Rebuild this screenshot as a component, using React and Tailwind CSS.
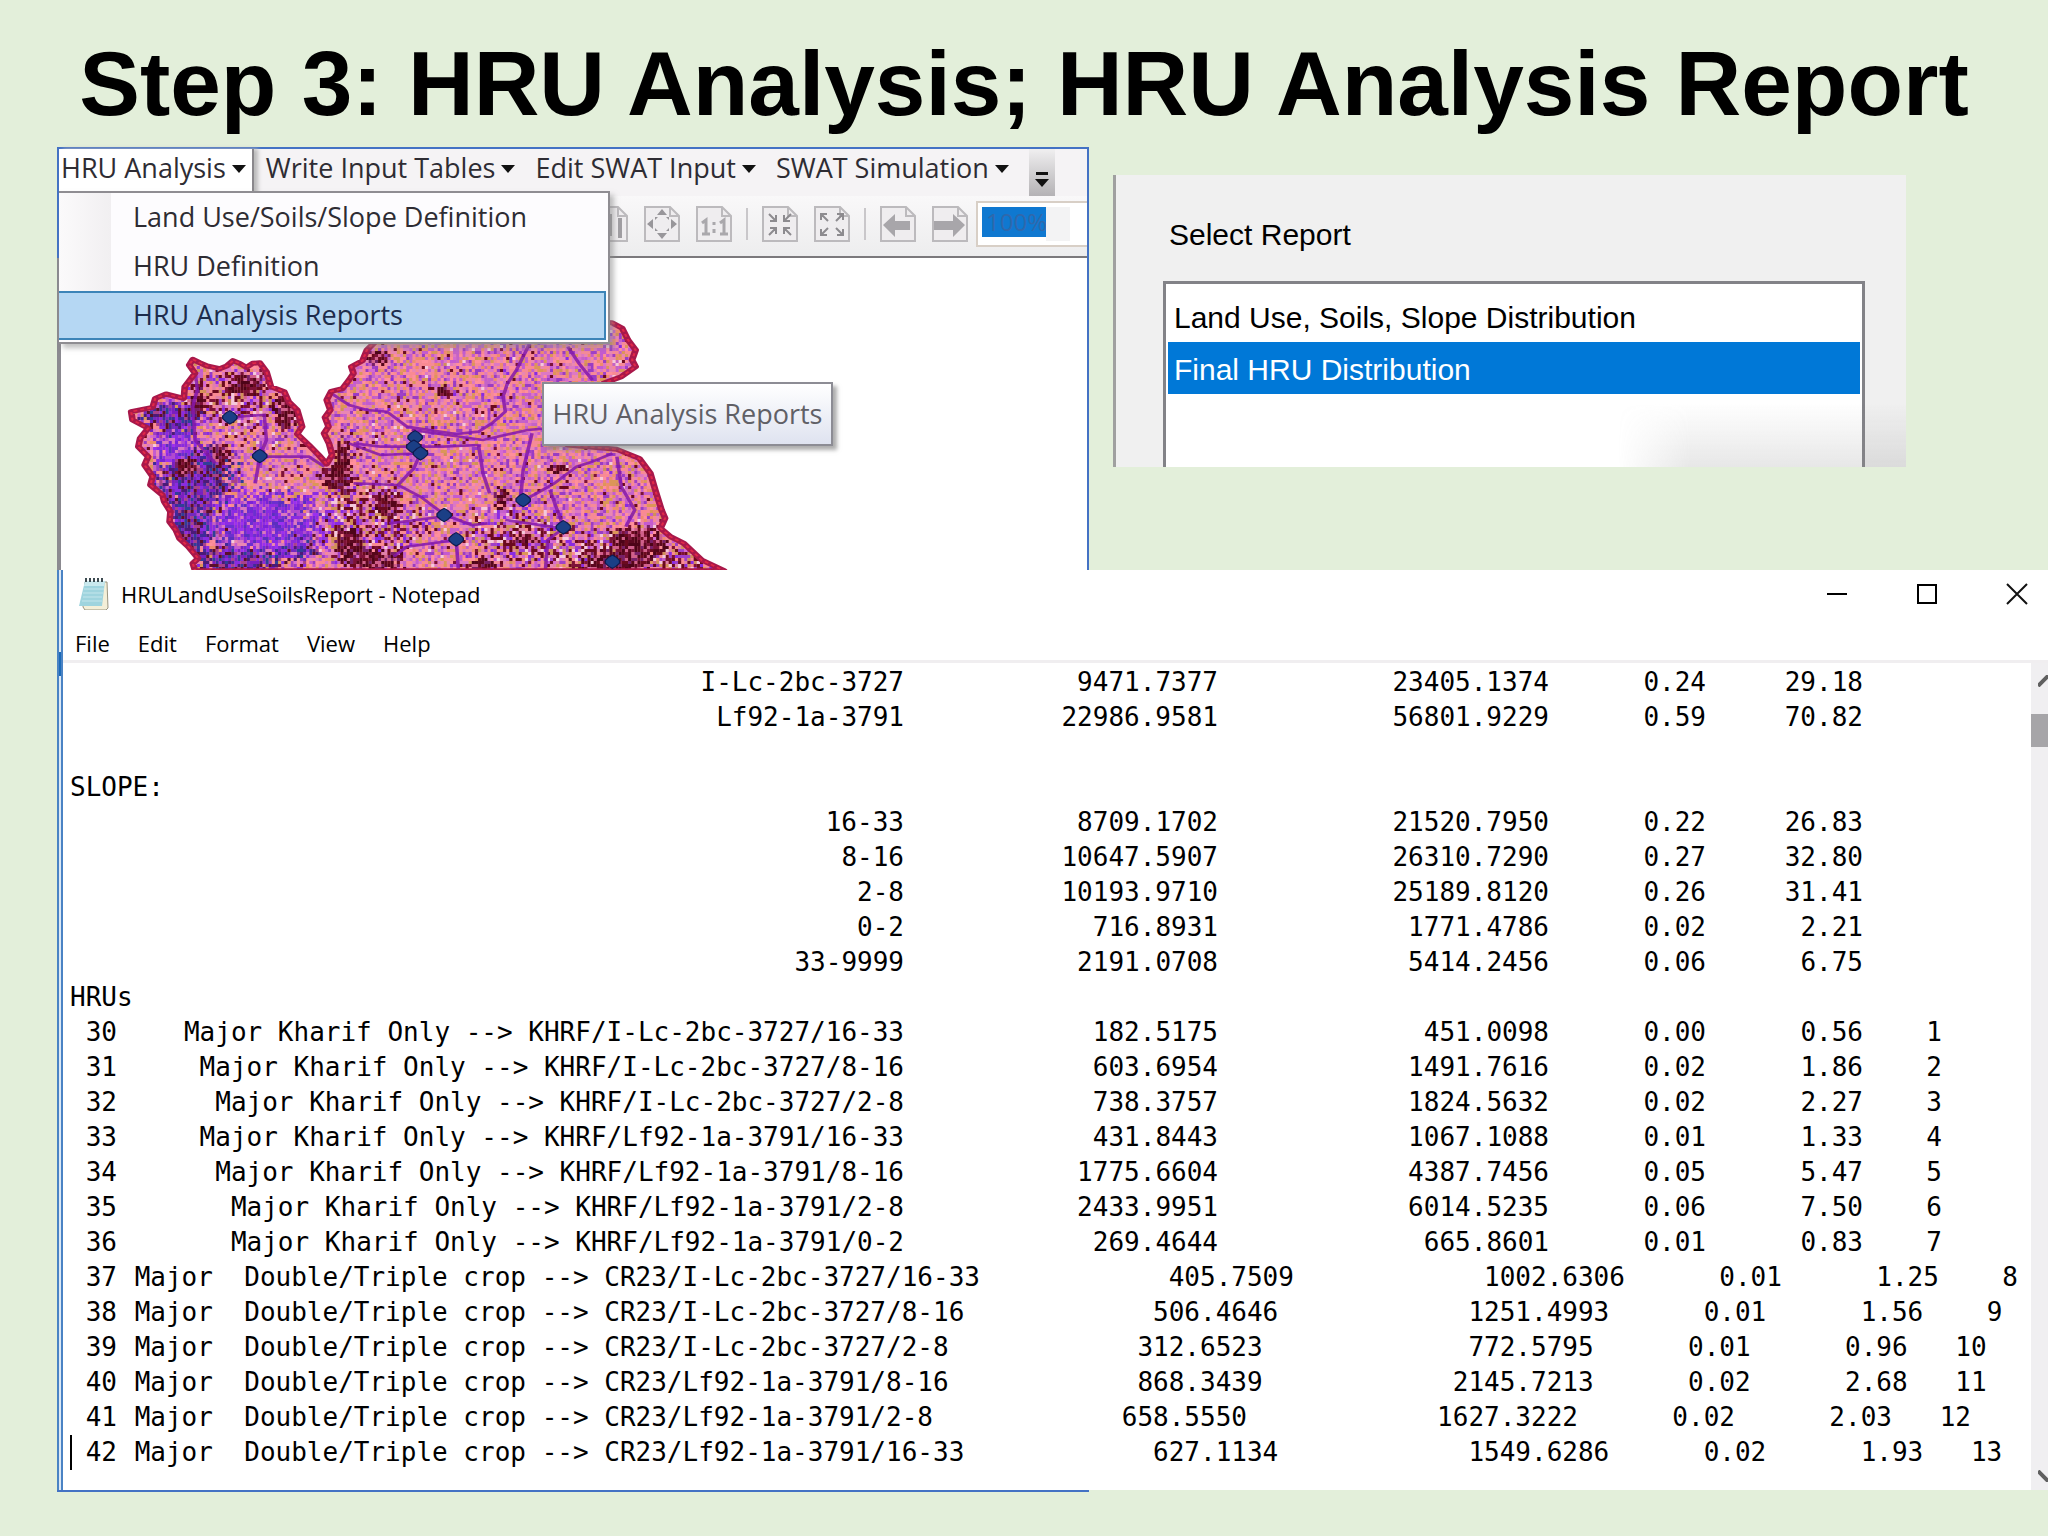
import React, { useState } from 'react';

const MENUS = ['HRU Analysis', 'Write Input Tables', 'Edit SWAT Input', 'SWAT Simulation'];
const HRU_ITEMS = ['Land Use/Soils/Slope Definition', 'HRU Definition', 'HRU Analysis Reports'];
const REPORTS = ['Land Use, Soils, Slope Distribution', 'Final HRU Distribution'];
const NOTEPAD_MENUS = ['File', 'Edit', 'Format', 'View', 'Help'];

// id, label, area [ha], area [acres], % watershed, % subbasin, HRU number
const ROWS = [
  ['', 'I-Lc-2bc-3727', '9471.7377', '23405.1374', '0.24', '29.18'],
  ['', 'Lf92-1a-3791', '22986.9581', '56801.9229', '0.59', '70.82'],
  [''],
  ['SLOPE:'],
  ['', '16-33', '8709.1702', '21520.7950', '0.22', '26.83'],
  ['', '8-16', '10647.5907', '26310.7290', '0.27', '32.80'],
  ['', '2-8', '10193.9710', '25189.8120', '0.26', '31.41'],
  ['', '0-2', '716.8931', '1771.4786', '0.02', '2.21'],
  ['', '33-9999', '2191.0708', '5414.2456', '0.06', '6.75'],
  ['HRUs'],
  [' 30', 'Major Kharif Only --> KHRF/I-Lc-2bc-3727/16-33', '182.5175', '451.0098', '0.00', '0.56', '1'],
  [' 31', 'Major Kharif Only --> KHRF/I-Lc-2bc-3727/8-16', '603.6954', '1491.7616', '0.02', '1.86', '2'],
  [' 32', 'Major Kharif Only --> KHRF/I-Lc-2bc-3727/2-8', '738.3757', '1824.5632', '0.02', '2.27', '3'],
  [' 33', 'Major Kharif Only --> KHRF/Lf92-1a-3791/16-33', '431.8443', '1067.1088', '0.01', '1.33', '4'],
  [' 34', 'Major Kharif Only --> KHRF/Lf92-1a-3791/8-16', '1775.6604', '4387.7456', '0.05', '5.47', '5'],
  [' 35', 'Major Kharif Only --> KHRF/Lf92-1a-3791/2-8', '2433.9951', '6014.5235', '0.06', '7.50', '6'],
  [' 36', 'Major Kharif Only --> KHRF/Lf92-1a-3791/0-2', '269.4644', '665.8601', '0.01', '0.83', '7'],
  [' 37', ' Major  Double/Triple crop --> CR23/I-Lc-2bc-3727/16-33', '405.7509', '1002.6306', '0.01', '1.25', '8'],
  [' 38', ' Major  Double/Triple crop --> CR23/I-Lc-2bc-3727/8-16', '506.4646', '1251.4993', '0.01', '1.56', '9'],
  [' 39', ' Major  Double/Triple crop --> CR23/I-Lc-2bc-3727/2-8', '312.6523', '772.5795', '0.01', '0.96', '10'],
  [' 40', ' Major  Double/Triple crop --> CR23/Lf92-1a-3791/8-16', '868.3439', '2145.7213', '0.02', '2.68', '11'],
  [' 41', ' Major  Double/Triple crop --> CR23/Lf92-1a-3791/2-8', '658.5550', '1627.3222', '0.02', '2.03', '12'],
  [' 42', ' Major  Double/Triple crop --> CR23/Lf92-1a-3791/16-33', '627.1134', '1549.6286', '0.02', '1.93', '13'],
];

const COL_WIDTHS = ['w-[314px]', 'w-[331px]', 'w-[157px]', 'w-[157px]', 'w-[79px]'];

const BASIN =
  'M340 88L355 98L372 108L400 116L416 108L430 92L445 100L460 112L474 100L490 98L505 125L515 170L545 185L555 215L574 240L585 290L574 312L600 345L622 375L640 402L652 375L645 340L634 310L644 290L636 262L648 240L640 210L650 184L675 176L690 150L700 130L695 110L720 92L730 60L760 20L1200 -25L1279 -22L1302 -5L1315 30L1332 60L1324 90L1332 110L1300 140L1260 160L1180 345L1290 358L1340 385L1365 430L1376 480L1390 540L1398 565L1388 595L1410 620L1440 640L1480 690L1530 722L345 722L340 700L352 685L330 650L310 625L302 600L288 575L290 545L276 515L272 495L245 465L250 440L232 405L240 380L218 350L222 325L240 295L205 270L202 245L250 232L256 205L280 192L320 205L322 170L345 130L332 105Z';

const STREAMS = [
  'M650 190L690 225L730 240L775 245L820 290L870 300L930 312L980 305L1010 280L1040 245L1035 200L1045 160L1065 120L1095 40',
  'M830 300L990 330L1090 300L1180 290M700 340L760 350L830 350L900 350L980 345',
  'M850 370L835 415L800 465L850 500L905 555L965 585L1000 580',
  'M980 345L990 430L1005 490M1100 310L1080 420L1075 500',
  'M1080 512L1110 490L1150 460L1200 410L1235 395L1280 370M1290 380L1300 470L1330 540L1310 590',
  'M1170 595L1135 630L1130 720M930 630L935 720M780 580L840 570L900 560M930 630L820 650L790 680',
  'M420 265L460 258L500 255L505 330L490 380L480 460M490 380L600 380L635 410',
  'M1180 50L1205 100L1235 150M700 460L800 465M690 340L760 375L850 370',
  'M345 120L350 180L340 230L345 330L390 400M1140 480L1170 590M1040 570L1170 595',
];

const GAUGES = [
  [423, 262], [490, 378], [838, 322], [835, 350], [850, 370], [1080, 510],
  [903, 555], [930, 628], [1170, 592], [1280, 695],
];

// land use mix for each part of the watershed
const MIXES = {
  pink: ['#f98a92', '#f58a98', '#ff8f9c', '#e987b4', '#dd78c4', '#ee8c6c', '#c45bd0', '#9a3cc4', '#dc9658', '#c463c8'],
  violet: ['#8a2be2', '#7a22d8', '#9b30f0', '#5a2fc0', '#b04ad0', '#8c2cd8', '#6b2fd0', '#8b2be4', '#d878c0'],
  navy: ['#4b1a78', '#3f2a9a', '#7a1fc0', '#5a0f2a', '#8a2be2', '#2f3f98', '#7428c0', '#a8408c'],
  maroon: ['#55061a', '#6b0a1e', '#4d0418', '#7d1238', '#782068', '#d0608c', '#5c0820'],
  mixed: ['#f98a92', '#d66ad0', '#8a2be2', '#6b0a1e', '#d09058', '#a040c8', '#7d1238', '#e080a8', '#6b0a1e', '#f4c8dc'],
};

const PATCHES = [
  ['maroon', 460, 165, 45, 36], ['maroon', 545, 245, 28, 60], ['maroon', 655, 440, 34, 40],
  ['maroon', 750, 75, 26, 24], ['maroon', 1160, 410, 28, 14], ['maroon', 1330, 640, 64, 60],
  ['maroon', 1290, 690, 90, 40], ['maroon', 750, 690, 60, 40], ['maroon', 675, 400, 18, 80],
  ['maroon', 985, 700, 34, 20], ['maroon', 320, 405, 30, 26], ['maroon', 900, 180, 18, 16],
  ['maroon', 1080, 625, 26, 16], ['maroon', 345, 215, 18, 50], ['maroon', 400, 365, 20, 36],
  ['maroon', 690, 640, 34, 60], ['maroon', 1030, 500, 18, 40], ['maroon', 770, 520, 30, 40],
  ['violet', 500, 570, 135, 95], ['navy', 340, 570, 60, 110], ['navy', 290, 260, 70, 50],
  ['violet', 300, 340, 50, 60], ['navy', 345, 430, 95, 100], ['navy', 570, 640, 50, 50],
  ['navy', 440, 690, 100, 50], ['mixed', 720, 570, 120, 130], ['mixed', 1060, 610, 120, 80],
  ['mixed', 1240, 670, 140, 70], ['mixed', 430, 200, 100, 90], ['mixed', 1440, 690, 60, 60],
];

function buildCells() {
  let seed = 11;
  const rand = () => {
    seed = (seed + 0x6d2b79f5) | 0;
    let t = Math.imul(seed ^ (seed >>> 15), 1 | seed);
    t = (t + Math.imul(t ^ (t >>> 7), 61 | t)) ^ t;
    return ((t ^ (t >>> 14)) >>> 0) / 4294967296;
  };
  const paths = {};
  for (let y = -27; y < 720; y += 9) {
    for (let x = 195; x < 1540; x += 7) {
      const near = PATCHES.find(([, px, py, rx, ry]) => {
        const d = ((x - px) / rx) ** 2 + ((y - py) / ry) ** 2;
        return d < 0.3 + rand() * 1.1;
      });
      const mix = MIXES[near ? near[0] : rand() < 0.12 ? 'mixed' : 'pink'];
      const color = mix[Math.floor(rand() * mix.length)];
      paths[color] = (paths[color] || '') + `M${x} ${y}h7v9h-7z`;
    }
  }
  return Object.entries(paths);
}

const CELLS = buildCells();

function WatershedMap() {
  return (
    <svg className="block w-[700px] h-[250px]" viewBox="0 -30 1568 750" preserveAspectRatio="none" aria-label="Watershed map">
      <defs>
        <clipPath id="basin">
          <path d={BASIN} />
        </clipPath>
      </defs>
      <g clipPath="url(#basin)">
        <rect x="190" y="-30" width="1360" height="760" fill="#f58a9a" />
        {CELLS.map(([color, d]) => (
          <path key={color} d={d} fill={color} />
        ))}
        {STREAMS.map((d) => (
          <path key={d} d={d} fill="none" stroke="#8418ac" strokeWidth="8" opacity="0.85" />
        ))}
      </g>
      <path d={BASIN} fill="none" stroke="#a8184a" strokeWidth="15" strokeLinejoin="round" />
      <path d={BASIN} fill="none" stroke="#e02848" strokeWidth="5" strokeDasharray="9 7" />
      {GAUGES.map(([x, y]) => (
        <path
          key={`${x}-${y}`}
          d={`M${x} ${y - 20}l8 6l8 10v8l-8 10l-8 6l-8 -6l-8 -10v-8l8 -10z`}
          fill="#1b3f86"
          stroke="#101a50"
          strokeWidth="3"
        />
      ))}
    </svg>
  );
}

function PageIcon({ children }) {
  return (
    <svg className="w-9 h-9" viewBox="0 0 36 36" fill="none" stroke="#bcbabd" strokeWidth="2">
      <path d="M1 1h25l9 9v25H1z" fill="#efedef" />
      <path d="M26 1v9h9" />
      {children}
    </svg>
  );
}

const TOOLS = [
  ['Select page', <path key="p" stroke="#a09ea2" strokeWidth="4" d="M18 8v22M28 12v20" />],
  [
    'Pan page',
    <path key="p" fill="#98969a" stroke="none" d="M18 3l5 6H13zM18 33l5-6H13zM3 18l6-5v10zM33 18l-6-5v10zM11 11h3l-3 3zM25 11h-3l3 3zM11 25h3l-3-3zM25 25h-3l3-3z" />,
  ],
  ['Zoom to 100%', <path key="p" stroke="#aaa8ac" strokeWidth="3" d="M6 17l4-3v14M6 28h8M24 17l4-3v14M24 28h8M18 16v3M18 23v4" />],
  null,
  [
    'Fixed zoom in',
    <path key="p" stroke="#8d8b8f" d="M7 8l7 7M14 9v6H8M29 8l-7 7M22 9v6h6M7 29l7-7M14 28v-6H8M29 29l-7-7M22 28v-6h6" />,
  ],
  [
    'Fixed zoom out',
    <path key="p" stroke="#8d8b8f" d="M14 15L7 8M7 14V8h6M22 15l7-7M29 14V8h-6M14 22l-7 7M7 23v6h6M22 22l7 7M29 23v6h-6" />,
  ],
  null,
  ['Previous extent', <path key="p" fill="#a8a6aa" stroke="none" d="M3 19L15 8v7h15v9H15v7z" />],
  ['Next extent', <path key="p" fill="#a8a6aa" stroke="none" d="M33 19L21 8v7H2v9h19v7z" />],
];

function Arrow() {
  return (
    <svg className="w-3.5 h-2" viewBox="0 0 14 8">
      <path d="M0 0h14L7 8z" fill="#111" />
    </svg>
  );
}

function MapWindow() {
  return (
    <section className="relative border-2 border-b-0 border-[#4472c4] bg-white font-['Open_Sans',sans-serif] text-[27px] text-[#2e2c33]">
      <nav className="flex h-[47px] items-stretch bg-[#f5f3f5]">
        {MENUS.map((name, i) => (
          <button
            key={name}
            className={
              i === 0
                ? 'flex items-center gap-1.5 pl-0.5 pr-1.5 pb-2 mr-3 whitespace-nowrap bg-white border-r-2 border-[#8a888c] shadow-[4px_0_4px_#bbb]'
                : 'flex items-center gap-1.5 mr-5 pb-2 whitespace-nowrap'
            }
          >
            {name}
            <Arrow />
          </button>
        ))}
        <button aria-label="Toolbar options" className="flex w-[26px] items-end justify-center bg-gradient-to-b from-[#f0eff0] to-[#b4b2b5] pb-2">
          <svg className="w-3.5 h-4" viewBox="0 0 14 16">
            <path d="M1 0h12v3H1zM0 7h14l-7 8z" fill="#111" />
          </svg>
        </button>
      </nav>

      <div className="flex h-[62px] items-center justify-end gap-4 border-b-2 border-[#7b797c] bg-gradient-to-b from-[#f9f8f9] to-[#ededee] pb-1">
        {TOOLS.map((tool, i) =>
          tool ? (
            <button key={tool[0]} aria-label={tool[0]}>
              <PageIcon>{tool[1]}</PageIcon>
            </button>
          ) : (
            <span key={i} className="-mx-0.5 h-8 w-0.5 bg-[#c9c7ca]" />
          )
        )}
        <div className="-ml-2 flex h-[46px] w-[111px] border-2 border-r-0 border-[#d8cfc6] bg-white py-1 pl-1">
          <input
            aria-label="Zoom"
            defaultValue="100%"
            className="h-[30px] w-16 bg-[#0f78d0] pl-1 text-2xl text-[#2f68ac]"
          />
          <span className="h-[34px] w-6 bg-[#f3f3f4]" />
        </div>
      </div>

      <div className="flex h-[312px] items-end border-l-4 border-[#8b8a90] -ml-0.5">
        <div className="-ml-5">
          <WatershedMap />
        </div>
      </div>

      <ul className="absolute left-0 top-[42px] w-[551px] border-2 border-l-0 border-[#8f8d92] bg-[#fdfcfe] pb-0.5 pr-0.5 shadow-[4px_4px_5px_#8888]">
        {HRU_ITEMS.map((item, i) => (
          <li key={item}>
            <button
              className={
                i === 2
                  ? 'flex h-[49px] w-full items-center border-2 border-l-0 border-[#3c84b8] bg-[#b5d7f3] pl-[74px] text-[#1d2c4c]'
                  : 'flex h-[49px] w-full items-center bg-gradient-to-r from-[#fbfafb] to-[#f1eff1] bg-[length:52px_100%] bg-no-repeat pl-[74px]'
              }
            >
              {item}
            </button>
          </li>
        ))}
      </ul>

      <div
        role="tooltip"
        className="absolute left-[483px] top-[233px] flex h-16 w-[291px] items-center justify-center border-2 border-[#8c8c94] bg-gradient-to-b from-white to-[#dfe3f0] text-[#606066] shadow-[4px_4px_4px_#7779]"
      >
        HRU Analysis Reports
      </div>
    </section>
  );
}

function ReportPicker() {
  const [selected, setSelected] = useState(1);

  return (
    <section className="relative mt-7 flex h-[292px] flex-col border-l-[3px] border-[#a0a0a0] bg-[#f0f0f0] pl-[47px] pr-[41px] font-['Liberation_Sans',sans-serif] text-[30px] leading-[48px] text-black">
      <h2 id="report-label" className="mt-9 mb-[22px] pl-1.5">Select Report</h2>
      <ul role="listbox" aria-labelledby="report-label" className="flex-1 border-[3px] border-b-0 border-[#828287] bg-white px-0.5 pt-1.5">
        {REPORTS.map((name, i) => (
          <li key={name} role="option" aria-selected={selected === i}>
            <button
              onClick={() => setSelected(i)}
              className={
                selected === i
                  ? 'block w-full bg-[#0078d7] pt-1 pl-1.5 text-left text-white'
                  : 'block w-full pt-1 pl-1.5 text-left'
              }
            >
              {name}
            </button>
          </li>
        ))}
      </ul>
      <div className="pointer-events-none absolute bottom-0 right-0 h-16 w-72 bg-gradient-to-b from-transparent to-[#8883] [mask-image:linear-gradient(to_right,transparent,black_25%)]" />
    </section>
  );
}

function NotepadIcon() {
  return (
    <svg className="w-[30px] h-8" viewBox="0 0 30 32">
      <path d="M6 4h22l1 26-2 2H6l-2-3z" fill="#f4efd8" stroke="#9a9480" />
      <path d="M6 3h20l-3 25H0z" fill="#9fd4de" />
      <path d="M6 3h20l-1 5H5z" fill="#c9e9ee" />
      <path d="M5 11h20M4 15h20M4 19h19M3 23h20" stroke="#c4e6ec" />
      <path d="M7 0v4M11 0v4M15 0v4M19 0v4M23 0v4" stroke="#3c4a50" strokeWidth="2" />
    </svg>
  );
}

function ReportRow({ row, caret }) {
  const [id, label, ...values] = row;

  return (
    <tr className={caret ? 'flex h-[35px] whitespace-pre shadow-[inset_2px_0_0_#000]' : 'flex h-[35px] whitespace-pre'}>
      <td className="w-[49px] shrink-0 p-0">{id}</td>
      {/* a long label pushes the figures after it to the right */}
      {label && <td className="min-w-[785px] shrink-0 p-0 text-right">{label}</td>}
      {values.map((value, col) => (
        <td key={col} className={`${COL_WIDTHS[col]} shrink-0 p-0 text-right`}>
          {value}
        </td>
      ))}
    </tr>
  );
}

function Notepad() {
  return (
    <section className="flex bg-white text-black">
      <div className="flex w-1.5 flex-col border-x-2 border-[#4a83c4] bg-[#dbe8f5]">
        <span className="mt-[82px] h-6 bg-[#1b6ab8]" />
      </div>

      <div className="min-w-0 flex-1">
        <header className="flex h-12 items-center gap-3 pl-4 pr-5 font-['Open_Sans',sans-serif] text-[22px]">
          <NotepadIcon />
          <span className="flex-1">HRULandUseSoilsReport - Notepad</span>
          <div className="flex gap-[68px]">
            <button aria-label="Minimize">
              <svg className="w-[22px] h-[22px]" viewBox="0 0 22 22">
                <path d="M1 11h20" stroke="#000" strokeWidth="2" />
              </svg>
            </button>
            <button aria-label="Maximize">
              <svg className="w-[22px] h-[22px]" viewBox="0 0 22 22">
                <path d="M2 2h18v18H2z" fill="none" stroke="#000" strokeWidth="2" />
              </svg>
            </button>
            <button aria-label="Close">
              <svg className="w-[22px] h-[22px]" viewBox="0 0 22 22">
                <path d="M1 1l20 20M21 1L1 21" stroke="#111" strokeWidth="2" />
              </svg>
            </button>
          </div>
        </header>

        <nav className="flex h-[45px] items-center gap-7 border-b-[3px] border-[#f0eef0] pl-3 pt-2 font-['Open_Sans',sans-serif] text-[22px]">
          {NOTEPAD_MENUS.map((name) => (
            <button key={name}>{name}</button>
          ))}
        </nav>

        <div className="flex">
          <div className="min-w-0 flex-1 overflow-hidden pt-0.5 pb-5 pl-[7px]">
            <table className="block font-['DejaVu_Sans_Mono',monospace] text-[26px] leading-[35px]">
              <tbody className="block">
                {ROWS.map((row, i) => (
                  <ReportRow key={i} row={row} caret={i === ROWS.length - 1} />
                ))}
              </tbody>
            </table>
          </div>

          {/* scrollbar, cut off by the right edge */}
          <div className="flex w-[17px] flex-col items-end overflow-hidden bg-[#f0eff1]">
            <svg className="mt-3 w-2.5 h-3" viewBox="0 0 10 12">
              <path d="M0 11L9 2L10 3" fill="none" stroke="#606060" strokeWidth="4" />
            </svg>
            <span className="mt-[27px] h-[33px] w-full bg-[#a6a5a8]" />
            <svg className="mt-auto mb-2 w-2.5 h-3" viewBox="0 0 10 12">
              <path d="M0 1L9 10L10 9" fill="none" stroke="#606060" strokeWidth="4" />
            </svg>
          </div>
        </div>
      </div>
    </section>
  );
}

function App() {
  return (
    <main className="min-h-screen overflow-hidden bg-[#e3efda]">
      <h1 className="h-[147px] pt-8 text-center font-['Liberation_Sans',sans-serif] text-[91px] font-bold leading-[104px] whitespace-nowrap text-black">
        Step 3: HRU Analysis; HRU Analysis Report
      </h1>
      <div className="grid grid-cols-[1032fr_793fr] gap-6 pl-[57px] pr-[142px]">
        <MapWindow />
        <ReportPicker />
      </div>
      <div className="pl-[57px]">
        <Notepad />
      </div>
      <div className="grid grid-cols-[1032fr_793fr] gap-6 pl-[57px] pr-[142px]">
        <div className="h-0.5 bg-[#4472c4]" />
      </div>
    </main>
  );
}

export default App;
